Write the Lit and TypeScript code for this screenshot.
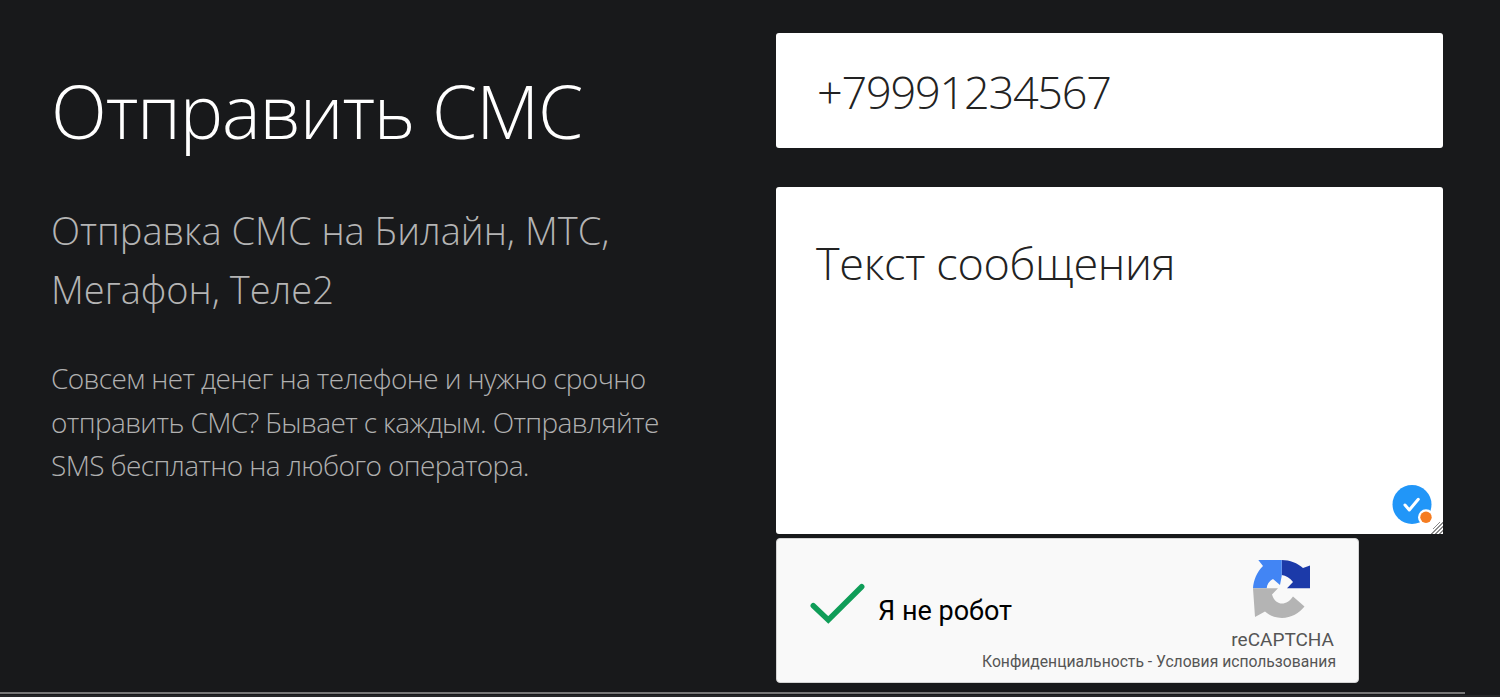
import { LitElement, html, css } from "lit";
import { customElement } from "lit/decorators.js";

@customElement("app-root")
export class AppRoot extends LitElement {
  static styles = css`
    :host { display: block; width: 1500px; height: 697px; overflow: hidden; background: #18191b; font-family: "Open Sans", sans-serif; }
    .page { display: flex; justify-content: space-between; height: 692px; padding: 33px 57px 0 51px; box-sizing: border-box; }
    .rule { width: 1465px; height: 2px; background: #777; }
    .rule2 { width: 100%; height: 2px; margin-top: 1px; background: #242527; }
    .left { width: 621px; padding-top: 34px; }
    h1 { margin: 0; font-weight: 300; font-size: 73px; line-height: 88px; color: #fff; letter-spacing: -1.15px; white-space: nowrap; }
    h2 { margin: 46px 0 0; font-weight: 300; font-size: 38px; line-height: 59px; color: #b4b4b4; white-space: nowrap; }
    h2 span { display: block; }
    p { margin: 38px 0 0; font-weight: 300; font-size: 28px; line-height: 43.5px; color: #b0b0b0; letter-spacing: -0.62px; }
    .right { width: 667px; display: flex; flex-direction: column; align-items: flex-start; }
    .field { width: 100%; box-sizing: border-box; border: 0; outline: 0; background: #fff; border-radius: 3px; color: #222; font-family: "Open Sans", sans-serif; font-weight: 300; font-size: 45px; padding: 0 41px; display: block; }
    input.field { height: 115px; padding-top: 2px; letter-spacing: -1.2px; }
    .wrap { position: relative; width: 100%; margin-top: 39px; height: 347px; }
    textarea.field { height: 347px; padding: 43px 40px 0; resize: vertical; line-height: 66px; letter-spacing: -0.3px; }
    textarea.field::-webkit-resizer {
      background:
        linear-gradient(135deg, #fff 50%, transparent 50%),
        repeating-linear-gradient(135deg, #fff 0 1.5px, #8a8a8a 1.5px 2.8px);
    }
    .field::placeholder { color: #222; opacity: 1; }
    .badge { position: absolute; left: 616px; top: 298px; width: 40px; height: 40px; }
    .captcha { margin-top: 4px; width: 583px; height: 145px; box-sizing: border-box; background: #f9f9f9; border: 1px solid #d3d3d3; border-radius: 4px; display: flex; justify-content: space-between; font-family: Roboto, sans-serif; }
    .cleft { display: flex; align-items: center; gap: 13px; padding: 0 0 0 32px; height: 142px; flex: none; width: 200px; box-sizing: border-box; }
    .cleft svg { flex: none; width: 56px; height: 44px; margin-bottom: 14px; }
    .label { font-size: 27px; color: #000; white-space: nowrap; margin-top: 2px; }
    .cright { flex: none; display: flex; flex-direction: column; align-items: flex-end; padding: 16px 22px 0 0; }
    .logo { width: 75px; height: 70px; margin-right: 16px; filter: blur(0.4px); }
    .brand { font-size: 19px; line-height: 22px; color: #555; margin-top: 4px; margin-right: 2px; }
    .links { font-size: 15.7px; line-height: 18px; color: #555; margin-top: 2px; white-space: nowrap; }
  `;

  render() {
    return html`
      <div class="page">
        <section class="left">
          <h1>Отправить СМС</h1>
          <h2><span>Отправка СМС на Билайн, МТС,</span><span>Мегафон, Теле2</span></h2>
          <p>Совсем нет денег на телефоне и нужно срочно отправить СМС? Бывает с каждым. Отправляйте SMS бесплатно на любого оператора.</p>
        </section>
        <section class="right">
          <input class="field" .value=${"+79991234567"} />
          <div class="wrap">
            <textarea class="field" placeholder="Текст сообщения"></textarea>
            <svg class="badge" viewBox="0 0 40 40">
              <circle cx="20" cy="19.500" r="19.500" fill="#2196f8" />
              <path d="M13 20l4.300 5 9-10.700" fill="none" stroke="#fff" stroke-width="3" stroke-linecap="round" stroke-linejoin="round" />
              <circle cx="34" cy="32.300" r="8" fill="#fff" />
              <circle cx="34" cy="32.300" r="5.700" fill="#f57c20" />
            </svg>
          </div>
          <div class="captcha">
            <div class="cleft">
              <svg viewBox="0 0 56 44"><path d="M4.300 24.700L19.300 39 52.700 5.700" fill="none" stroke="#0f9d58" stroke-width="5.500" stroke-linecap="round" /></svg>
              <span class="label">Я не робот</span>
            </div>
            <div class="cright">
              <svg class="logo" viewBox="0 0 75 70">
                <path d="M36.700 5C45 5 52.500 8 58 13L65 10.500V33.300H42L48 27C45 23 41 20.500 36.700 20Z" fill="#1c3aa9" />
                <path d="M13.300 5H36.700V21L35 30L28 24C24 26 22 29.500 21.700 33.300H8C8.500 25 12 17 18 11Z" fill="#4285f4" />
                <path d="M8 33.300H33L27 39.500C29 46 33 48.500 37 48.500C41 48.500 45 46 48 41.500L59.500 51.500C54.500 58 46 63 37 63C29 63 24 60 20 56.500L10 62Z" fill="#b4b4b4" />
              </svg>
              <div class="brand">reCAPTCHA</div>
              <div class="links">Конфиденциальность - Условия использования</div>
            </div>
          </div>
        </section>
      </div>
      <div class="rule"></div>
      <div class="rule2"></div>
    `;
  }
}
